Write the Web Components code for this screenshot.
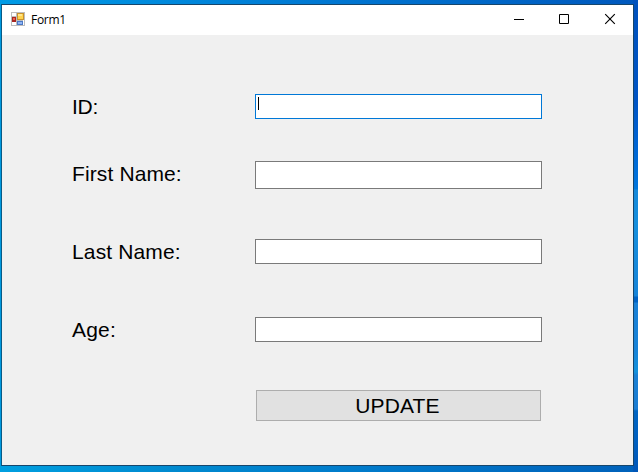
<!DOCTYPE html>
<html lang="en"><head><meta charset="utf-8"><title>Form1</title>
<style>
html,body{margin:0;width:638px;height:472px;overflow:hidden;font-family:"Liberation Sans",Arial,sans-serif;color:#000}
</style></head><body>
<desktop-bg>
<form-window caption="Form1">
<form-row label="ID:" style="margin-top:59px;--field-h:25px;--track:-.3px"><text-field slot="field" focused></text-field></form-row>
<form-row label="First Name:" style="margin-top:42px;--field-h:28px;--track:.12px"><text-field slot="field"></text-field></form-row>
<form-row label="Last Name:" style="margin-top:50px;--field-h:25px;--track:.14px"><text-field slot="field"></text-field></form-row>
<form-row label="Age:" style="margin-top:53px;--field-h:25px;--track:.2px"><text-field slot="field"></text-field></form-row>
<push-button>UPDATE</push-button>
</form-window>
</desktop-bg>
<script>
const define=(name,html,setup)=>customElements.define(name,class extends HTMLElement{
  constructor(){super();this.attachShadow({mode:'open'}).innerHTML=html;}
  connectedCallback(){if(setup)setup(this,this.shadowRoot);}
});
define('desktop-bg',`<style>
:host{display:block;box-sizing:border-box;width:638px;height:472px;padding:4px 4px 6px 1px;
background:
linear-gradient(180deg,#0052bd 0,#0054c4 100px,#0063d2 140px,#0074dc 185px,#0078dc 189px,#1689da 190px,#168fdd 225px,#1784d8 296px,#0062c4 297px,#0062c4 302px,#1a80d6 303px,#1883d8 350px,#1392dc 372px,#1a80d4 375px,#1a7cd2 409px,#0064c2 411px,#0060c0 440px,#0056b8 472px) right/5px 100% no-repeat,
linear-gradient(90deg,#009be5 0,#0088dc 180px,#0074d0 360px,#0058bd 638px) top/100% 5px no-repeat,
linear-gradient(90deg,#009fe0 0,#0089cf 180px,#007bcb 360px,#0061ba 638px) bottom/100% 8px no-repeat,
#0099df}
</style><slot></slot>`);
define('form-window',`<style>
:host{display:flex;flex-direction:column;box-sizing:border-box;width:633px;height:462px;border:1px solid #16466c;border-left-color:#085b86;background:#f0f0f0}
main{display:flex;flex-direction:column;padding-left:70px}
</style><title-bar></title-bar><main><slot></slot></main>`,(h,r)=>r.querySelector('title-bar').setAttribute('caption',h.getAttribute('caption')));
define('title-bar',`<style>
:host{display:flex;height:30px;flex:none;background:#fff;align-items:center}
.icon{margin:-2px 5px 0 9px;flex:none}
span{flex:1;font:12px/16px "Open Sans","Noto Sans",sans-serif;letter-spacing:-.3px}
.ctl{width:46px;height:30px;flex:none}
.last{width:45px}
</style>
<svg class="icon" width="15" height="16" shape-rendering="crispEdges">
<path fill="#bdbdbd" d="M0 1h14v14H0z"/>
<path fill="#fff" d="M1 2h4v3H1zM1 11h4v3H1zM12 9h1v5h-1z"/>
<path fill="#a92622" d="M1 6h4v5H1z"/><path fill="#ef604c" d="M2 7h2v2H2z"/>
<path fill="#c8922c" d="M6 2h7v7H6z"/><path fill="#ffd34e" d="M7 3h5v5H7z"/><path fill="#ffe68c" d="M7 3h4v2H7z"/>
<path fill="#4b78c5" d="M6 10h6v4H6z"/><path fill="#8fb5f5" d="M7 11h4v2H7z"/>
</svg>
<span></span>
<svg class="ctl" viewBox="0 0 46 30"><path d="M18 14.5h10" stroke="#000"/></svg>
<svg class="ctl" viewBox="0 0 46 30"><path d="M17.5 9.5h9v9h-9z" fill="none" stroke="#000"/></svg>
<svg class="ctl last" viewBox="0 0 45 30"><path d="M17.2 9.2l9.6 9.6M26.8 9.2l-9.6 9.6" stroke="#000" stroke-width="1.15"/></svg>`,
(h,r)=>r.querySelector('span').textContent=h.getAttribute('caption'));
define('form-row',`<style>
:host{display:grid;grid-template-columns:183px 287px;height:var(--field-h)}
label{font-size:21px;line-height:24px;padding-top:1px;white-space:nowrap;letter-spacing:var(--track)}
</style><label></label><slot name="field"></slot>`,(h,r)=>r.querySelector('label').textContent=h.getAttribute('label'));
define('text-field',`<style>
:host{display:block;box-sizing:border-box;width:287px;height:var(--field-h);background:#fff;border:1px solid #7a7a7a;padding:2px}
:host([focused]){border-color:#0078d7}
i{display:none;width:1px;height:13px;background:#000}
:host([focused]) i{display:block}
</style><i></i>`);
define('push-button',`<style>
:host{display:block;margin:48px 0 0 184px;width:285px}
button{display:block;box-sizing:border-box;width:285px;height:31px;margin:0;padding:0 2px 0 0;border:1px solid #adadad;border-radius:0;background:#e1e1e1;color:#000;font:21px/24px "Liberation Sans",Arial,sans-serif;letter-spacing:.12px}
</style><button type="button"><slot></slot></button>`);
</script></body></html>
